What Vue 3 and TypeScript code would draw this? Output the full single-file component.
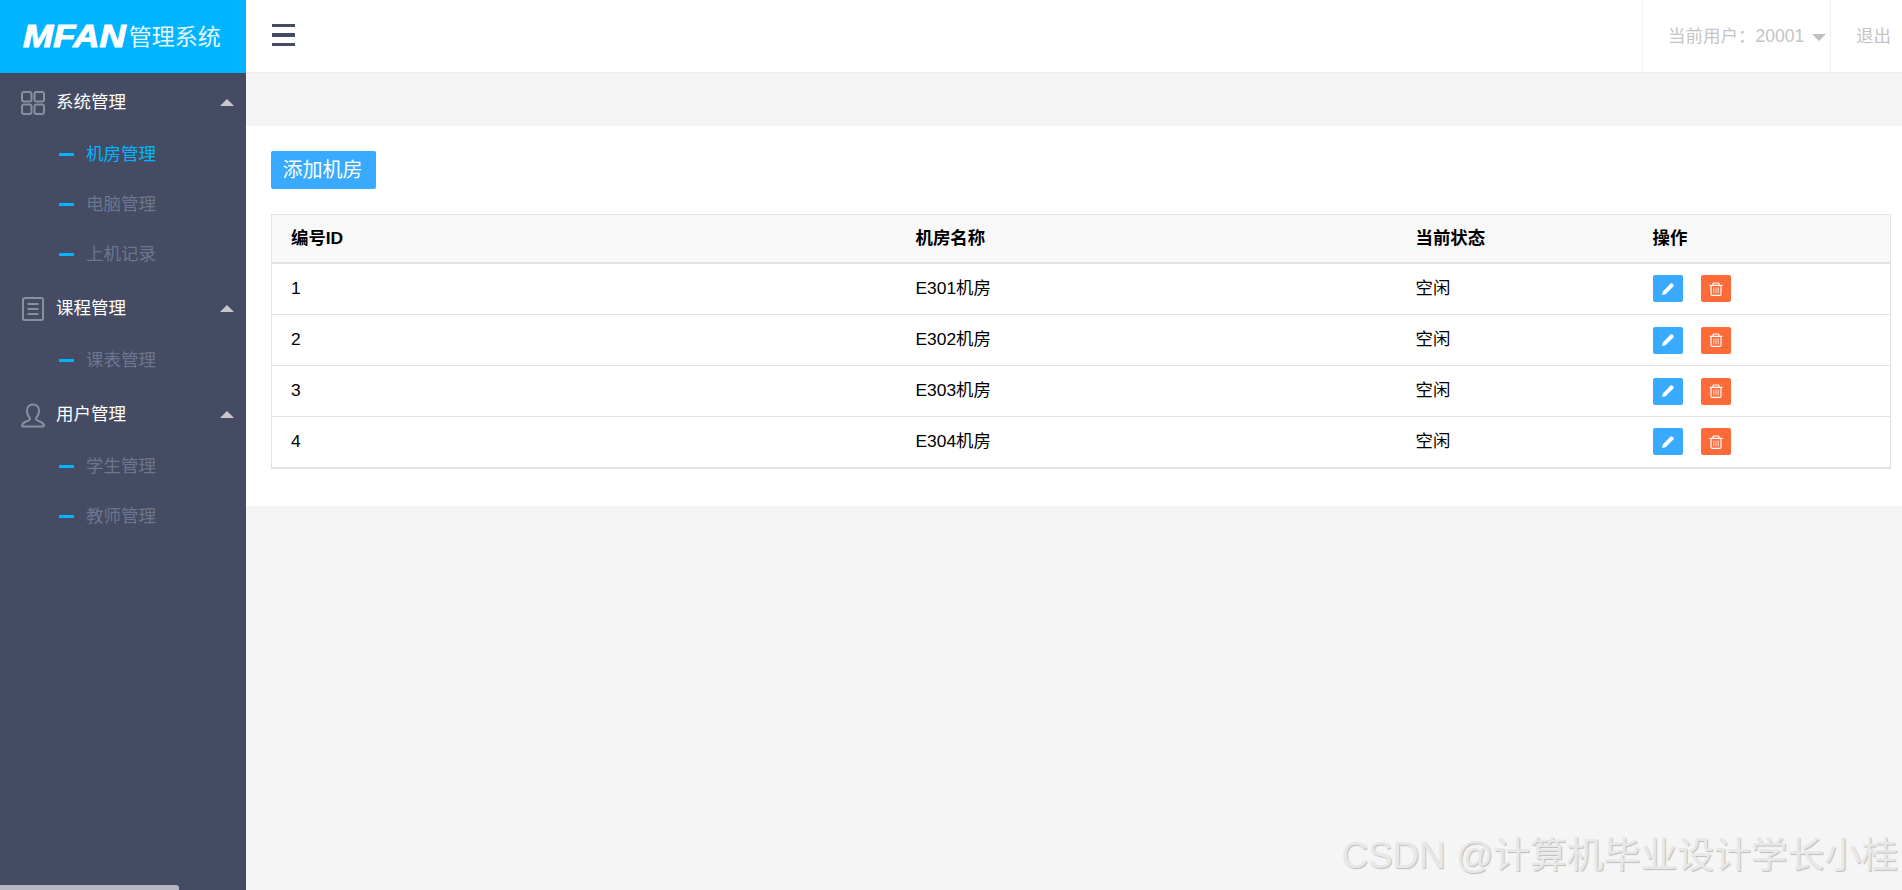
<script setup lang="ts">
interface Room { id: number; name: string; status: string }
interface Group { title: string; icon: string; items: string[] }

const groups: Group[] = [
  { title: '系统管理', icon: 'grid', items: ['机房管理', '电脑管理', '上机记录'] },
  { title: '课程管理', icon: 'doc', items: ['课表管理'] },
  { title: '用户管理', icon: 'user', items: ['学生管理', '教师管理'] },
]
const rooms: Room[] = [
  { id: 1, name: 'E301机房', status: '空闲' },
  { id: 2, name: 'E302机房', status: '空闲' },
  { id: 3, name: 'E303机房', status: '空闲' },
  { id: 4, name: 'E304机房', status: '空闲' },
]
</script>

<template>
  <div class="app">
    <aside class="side">
      <div class="logo"><span class="mfan">MFAN</span><span class="logo-t">管理系统</span></div>
      <nav class="nav">
        <div v-for="g in groups" :key="g.title" class="group">
          <div class="group-h">
            <svg class="gi" width="26" height="26" viewBox="0 0 26 26" fill="none" stroke="#8a8f9f" stroke-width="2">
              <template v-if="g.icon === 'grid'">
                <rect x="2" y="2" width="9.5" height="9.5" rx="2" />
                <rect x="14.5" y="2" width="9.5" height="9.5" rx="2" />
                <rect x="2" y="14.5" width="9.5" height="9.5" rx="2" />
                <rect x="14.5" y="14.5" width="9.5" height="9.5" rx="2" />
              </template>
              <template v-else-if="g.icon === 'doc'">
                <rect x="3" y="2" width="20" height="22" rx="1.5" />
                <path d="M7.5 8h11M7.5 13h11M7.5 18h11" />
              </template>
              <template v-else>
                <path d="M13 2.5c-4 0-6 3-6 6.5 0 3 1.2 5.2 2.6 6.5.6.6.5 2-.4 2.6C7.500 19.500 2.500 20 2 23.500c0 .6.300 1 1 1h20c.7 0 1-.4 1-1-.5-3.500-5.500-4-7.200-5.400-.9-.6-1-2-.4-2.600C17.800 14.200 19 12 19 9c0-3.500-2-6.500-6-6.500z" />
              </template>
            </svg>
            <span class="gt">{{ g.title }}</span>
            <span class="up"></span>
          </div>
          <ul class="subs">
            <li v-for="i in g.items" :key="i" class="sub" :class="{ active: i === '机房管理' }">
              <span class="dash"></span><span class="st">{{ i }}</span>
            </li>
          </ul>
        </div>
      </nav>
      <div class="thumb"></div>
    </aside>

    <main class="main">
      <header class="top">
        <div class="burger"><i></i><i></i><i></i></div>
        <div class="user"><span class="ht">当前用户：20001</span><span class="down"></span></div>
        <div class="quit"><span class="ht">退出</span></div>
      </header>
      <section class="panel">
        <button class="add">添加机房</button>
        <table class="tbl">
          <colgroup>
            <col class="c1" /><col class="c2" /><col class="c3" /><col />
          </colgroup>
          <thead>
            <tr><th>编号ID</th><th>机房名称</th><th>当前状态</th><th>操作</th></tr>
          </thead>
          <tbody>
            <tr v-for="r in rooms" :key="r.id">
              <td>{{ r.id }}</td>
              <td>{{ r.name }}</td>
              <td>{{ r.status }}</td>
              <td class="opcell">
                <div class="ops">
                  <span class="op edit">
                    <svg width="14" height="14" viewBox="0 0 14 14"><path fill="#fff" d="M1 13l.8-3.600L9.600 1.600c.5-.5 1.200-.5 1.700 0l1.100 1.100c.5.5.5 1.200 0 1.700L4.600 12.200z" /></svg>
                  </span>
                  <span class="op del">
                    <svg width="14" height="14" viewBox="0 0 14 14" fill="none" stroke="#fff" stroke-width="1.200">
                      <path d="M.5 3.400h13M4 3.200V1.800C4 1.200 4.400 1 5 1h4c.6 0 1 .2 1 .8v1.400" />
                      <path d="M2 3.500v8.700c0 .7.400 1.100 1.100 1.100h7.800c.7 0 1.100-.4 1.100-1.100V3.500" />
                      <path d="M4.800 5.500v5.800M7 5.500v5.800M9.200 5.500v5.800" stroke-width=".8" />
                    </svg>
                  </span>
                </div>
              </td>
            </tr>
          </tbody>
        </table>
      </section>
    </main>
    <div class="mark">CSDN @计算机毕业设计学长小桂</div>
  </div>
</template>

<style>
html, body { margin: 0; overflow: hidden; }
</style>

<style scoped>
.app {
  position: relative;
  display: flex;
  width: 100%;
  height: 890px;
  overflow: hidden;
  background: #f5f5f5;
  font-family: "Liberation Sans", "Noto Sans CJK SC", sans-serif;
}
.side {
  position: relative;
  flex: 0 0 246px;
  background: #444b62;
}
.logo {
  height: 73px;
  background: #00b4ff;
  color: #fff;
  display: flex;
  align-items: center;
  padding-left: 23px;
  box-sizing: border-box;
}
.mfan {
  display: inline-block;
  font-size: 31px;
  line-height: 1;
  font-weight: 700;
  font-style: italic;
  -webkit-text-stroke: 1px #fff;
  transform: scaleX(1.17);
  transform-origin: left center;
  margin-right: 19px;
}
.logo-t { font-size: 23px; color: #e4f6ff; margin-left: -1px; padding-bottom: 4px; }
.nav { padding-top: 1px; }
.group-h {
  height: 55px;
  display: flex;
  align-items: center;
  padding: 0 12px 0 20px;
  color: #fff;
  font-size: 17.500px;
}
.gi { flex: none; margin-right: 10px; margin-top: 2px; }
.gt { flex: 1; padding-bottom: 3px; }
.up {
  width: 0;
  height: 0;
  border-left: 7.500px solid transparent;
  border-right: 7.500px solid transparent;
  border-bottom: 7.500px solid #c8c8c8;
  margin-top: 2px;
}
.subs { list-style: none; margin: 0; padding: 0 0 1px; }
.sub {
  height: 50px;
  display: flex;
  align-items: center;
  padding-left: 59px;
  font-size: 17.500px;
  color: #6c7690;
}
.st { padding-bottom: 3px; }
.sub.active { color: #00b4ff; }
.dash {
  width: 15px;
  height: 3px;
  background: #00b4ff;
  margin-right: 12px;
}
.thumb {
  position: absolute;
  left: 0;
  bottom: 0;
  width: 179px;
  height: 5px;
  background: #b5b8c0;
  border-top-right-radius: 3px;
}
.main { flex: 1; min-width: 0; }
.top {
  height: 73px;
  box-sizing: border-box;
  background: #fff;
  border-bottom: 1px solid #eeeeee;
  display: flex;
  align-items: center;
  color: #c4c4c4;
  font-size: 17.500px;
}
.burger {
  margin-left: 26px;
  margin-right: auto;
  margin-top: -2px;
  width: 23px;
  display: flex;
  flex-direction: column;
  gap: 6px;
}
.burger i { display: block; height: 3.500px; background: #444b62; }
.ht { padding-bottom: 3px; }
.user {
  height: 100%;
  box-sizing: border-box;
  width: 189px;
  border-left: 1px solid #f0f0f0;
  border-right: 1px solid #f0f0f0;
  display: flex;
  align-items: center;
  padding-left: 25px;
  white-space: nowrap;
}
.down {
  margin-left: 8px;
  margin-top: 2px;
  width: 0;
  height: 0;
  border-left: 7.500px solid transparent;
  border-right: 7.500px solid transparent;
  border-top: 7.500px solid #c0c0c0;
}
.quit { width: 71px; box-sizing: border-box; padding-left: 25px; white-space: nowrap; display: flex; align-items: center; height: 100%; }
.panel {
  margin-top: 53px;
  background: #fff;
  padding: 25px 11px 37px 25px;
}
.add {
  display: block;
  height: 38px;
  width: 105px;
  padding: 0 2px 3px 0;
  border: 0;
  border-radius: 2px;
  background: #38aaff;
  color: #fff;
  font: inherit;
  font-size: 20px;
}
.tbl {
  margin-top: 25px;
  width: 100%;
  border-collapse: collapse;
  table-layout: fixed;
  border: 1px solid #e2e2e2;
  border-bottom-width: 2px;
  font-size: 17.400px;
  color: #000;
}
.c1 { width: 625px; }
.c2 { width: 500px; }
.c3 { width: 237px; }
th, td {
  padding: 0 0 2px 19px;
  text-align: left;
  box-sizing: border-box;
  line-height: 20px;
}
th {
  height: 48px;
  padding-bottom: 1px;
  background: #f8f8f8;
  font-weight: 700;
  border-bottom: 2px solid #e2e2e2;
}
td { height: 51px; border-bottom: 1px solid #e2e2e2; }
tbody tr:first-child td { height: 52px; }
tbody tr:last-child td { border-bottom: 0; }
.opcell { padding-bottom: 0; }
.ops { display: flex; gap: 18px; }
.op {
  width: 30px;
  height: 27px;
  border-radius: 2px;
  display: flex;
  align-items: center;
  justify-content: center;
}
.edit { background: #38aaff; }
.del { background: #ff6a39; }
.mark {
  position: absolute;
  right: 4px;
  bottom: 14px;
  font-size: 36.800px;
  line-height: 40px;
  white-space: nowrap;
  color: #e8e8e8;
  text-shadow: 1px 1px 1px #bcbcbc;
}
</style>
